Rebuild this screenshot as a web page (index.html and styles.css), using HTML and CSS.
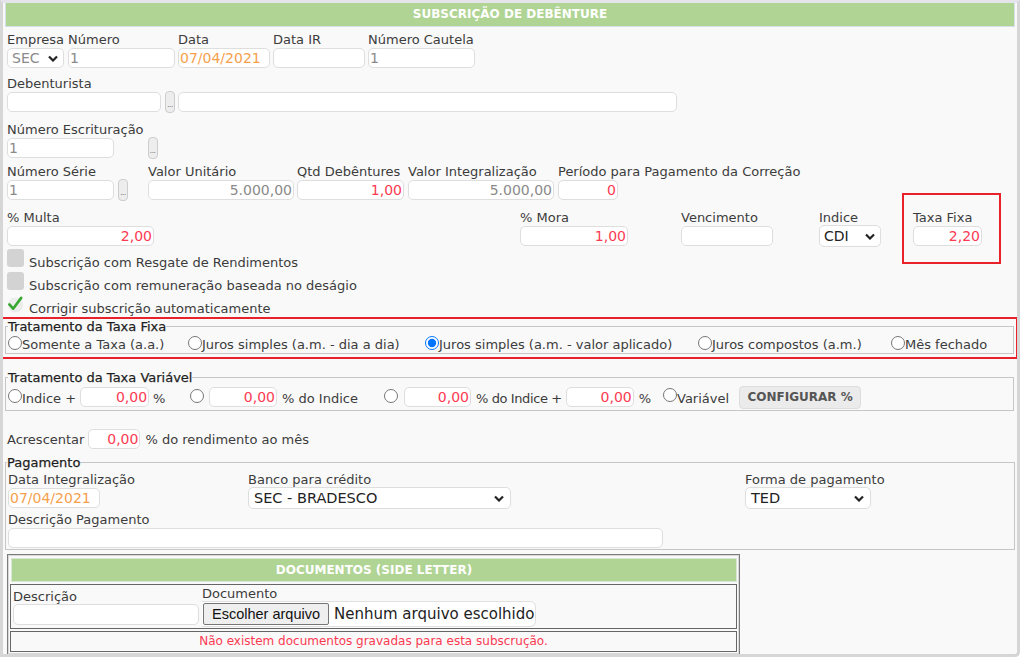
FILE: index.html
```html
<!DOCTYPE html>
<html lang="pt-BR">
<head>
<meta charset="utf-8">
<title>Subscrição de Debênture</title>
<link rel="stylesheet" href="styles.css">
</head>
<body>
<div class="panel">
  <div class="title">SUBSCRIÇÃO DE DEBÊNTURE</div>
  <div class="content">

    <div class="row r1">
      <div class="f"><label>Empresa</label>
        <div class="sel w57"><span class="muted">SEC</span><svg class="chev" width="10" height="7" viewBox="0 0 10 7"><path d="M1 1.5 L5 5.5 L9 1.5" fill="none" stroke="#222" stroke-width="2.2"/></svg></div>
      </div>
      <div class="f ml4"><label>Número</label><input class="inp w107 muted" value="1"></div>
      <div class="f ml3"><label>Data</label><input class="inp w92 orange" value="07/04/2021"></div>
      <div class="f ml3"><label>Data IR</label><input class="inp w92" value=""></div>
      <div class="f ml3"><label>Número Cautela</label><input class="inp w107 muted" value="1"></div>
    </div>

    <div class="row r2">
      <div class="f"><label>Debenturista</label><input class="inp w154" value=""></div>
      <div class="dots ml4">...</div>
      <input class="inp w499 ml3" value="">
    </div>

    <div class="row r3">
      <div class="f"><label>Número Escrituração</label><input class="inp w107 muted" value="1"></div>
      <div class="dots ml4">...</div>
    </div>

    <div class="row r4">
      <div class="f"><label>Número Série</label><input class="inp w107 muted" value="1"></div>
      <div class="dots ml4">...</div>
      <div class="f ml20"><label>Valor Unitário</label><input class="inp w146 num muted" value="5.000,00"></div>
      <div class="f ml3"><label>Qtd Debêntures</label><input class="inp w107 num red" value="1,00"></div>
      <div class="f ml4"><label>Valor Integralização</label><input class="inp w146 num muted" value="5.000,00"></div>
      <div class="f ml4"><label>Período para Pagamento da Correção</label><input class="inp w60 num red" value="0"></div>
    </div>

    <div class="row r5">
      <div class="f c513"><label>% Multa</label><input class="inp w147 num red" value="2,00"></div>
      <div class="f c161"><label>% Mora</label><input class="inp w108 num red" value="1,00"></div>
      <div class="f c138"><label>Vencimento</label><input class="inp w92" value=""></div>
      <div class="f c94"><label>Indice</label>
        <div class="sel sel22 w62"><span class="dark">CDI</span><svg class="chev" width="10" height="7" viewBox="0 0 10 7"><path d="M1 1.5 L5 5.5 L9 1.5" fill="none" stroke="#222" stroke-width="2.2"/></svg></div>
      </div>
      <div class="f taxa"><label>Taxa Fixa</label><input class="inp w69 num red" value="2,20"></div>
    </div>

    <div class="checks">
      <div class="chk"><div class="box"></div><span>Subscrição com Resgate de Rendimentos</span></div>
      <div class="chk"><div class="box"></div><span>Subscrição com remuneração baseada no deságio</span></div>
      <div class="chk"><svg class="tick" width="18" height="18" viewBox="0 0 18 18"><circle cx="9" cy="10" r="8" fill="#ececec"/><path d="M2.5 9.5 L6.5 14 L15 2.5" fill="none" stroke="#36a832" stroke-width="2.8" stroke-linecap="round" stroke-linejoin="round"/></svg><span>Corrigir subscrição automaticamente</span></div>
    </div>

    <div class="hl">
      <fieldset class="fs fs-fixa">
        <legend>Tratamento da Taxa Fixa</legend>
        <div class="radios">
          <label class="ropt o1"><input type="radio" name="fixa"><span>Somente a Taxa (a.a.)</span></label>
          <label class="ropt o2"><input type="radio" name="fixa"><span>Juros simples (a.m. - dia a dia)</span></label>
          <label class="ropt o3"><input type="radio" name="fixa" checked><span>Juros simples (a.m. - valor aplicado)</span></label>
          <label class="ropt o4"><input type="radio" name="fixa"><span>Juros compostos (a.m.)</span></label>
          <label class="ropt"><input type="radio" name="fixa"><span>Mês fechado</span></label>
        </div>
      </fieldset>
    </div>

    <fieldset class="fs fs-var">
      <legend>Tratamento da Taxa Variável</legend>
      <div class="vrow">
        <div class="grp g1"><input type="radio" name="var"><span class="t">Indice +</span><input class="inp w69 num red ml4" value="0,00"><span class="t ml4">%</span></div>
        <div class="grp g2"><input type="radio" name="var"><input class="inp w68 num red ml5" value="0,00"><span class="t ml5">% do Indice</span></div>
        <div class="grp g3"><input type="radio" name="var"><input class="inp w67 num red ml6" value="0,00"><span class="t ml5 tight">% do Indice +</span><input class="inp w68 num red ml4" value="0,00"><span class="t ml5">%</span></div>
        <div class="grp"><input type="radio" name="var"><span class="t">Variável</span><button class="cfg">CONFIGURAR %</button></div>
      </div>
    </fieldset>

    <div class="row acres">
      <span class="t">Acrescentar</span><input class="inp w52 num red ml4" value="0,00"><span class="t ml5">% do rendimento ao mês</span>
    </div>

    <fieldset class="fs fs-pag">
      <legend>Pagamento</legend>
      <div class="row prow1">
        <div class="f c240"><label>Data Integralização</label><input class="inp w92 orange" value="07/04/2021"></div>
        <div class="f c497"><label>Banco para crédito</label>
          <div class="sel sel22 w263 big"><span class="dark">SEC - BRADESCO</span><svg class="chev" width="10" height="7" viewBox="0 0 10 7"><path d="M1 1.5 L5 5.5 L9 1.5" fill="none" stroke="#222" stroke-width="2.2"/></svg></div>
        </div>
        <div class="f"><label>Forma de pagamento</label>
          <div class="sel sel22 w126 big"><span class="dark">TED</span><svg class="chev" width="10" height="7" viewBox="0 0 10 7"><path d="M1 1.5 L5 5.5 L9 1.5" fill="none" stroke="#222" stroke-width="2.2"/></svg></div>
        </div>
      </div>
      <div class="row prow2">
        <div class="f"><label>Descrição Pagamento</label><input class="inp w655" value=""></div>
      </div>
    </fieldset>

    <div class="docs">
      <div class="docs-title">DOCUMENTOS (SIDE LETTER)</div>
      <div class="docs-row">
        <div class="f dfield"><label>Descrição</label><input class="inp w186 h21" value=""></div>
        <div class="f ml3"><label>Documento</label>
          <div class="file"><span class="file-btn">Escolher arquivo</span><span class="file-txt">Nenhum arquivo escolhido</span></div>
        </div>
      </div>
      <div class="docs-empty">Não existem documentos gravadas para esta subscrução.</div>
    </div>

  </div>
</div>
</body>
</html>
```

FILE: styles.css
```css
*, *::before, *::after { box-sizing: border-box; }
html, body { margin: 0; padding: 0; background: #ffffff; }
body {
  font-family: "DejaVu Sans", "Liberation Sans", sans-serif;
  font-size: 13px;
  color: #3c3c3c;
}

.panel {
  width: 1020px;
  height: 657px;
  background: #f9f9f9;
  border: 3px solid #d6d6d6;
  border-top-color: #e4e4ea;
  border-bottom-right-radius: 5px;
  overflow: hidden;
}

.title {
  margin: 0 2px;
  height: 24px;
  background: #b0d494;
  border: 1px solid #d3e0ea;
  border-top: none;
  color: #ffffff;
  font-weight: bold;
  font-size: 12px;
  line-height: 23px;
  text-align: center;
}

.content { padding: 0 2px; }

.row { display: flex; align-items: flex-end; padding-left: 2px; }
.r1 { margin-top: 5px; }
.r2 { margin-top: 8px; }
.r3 { margin-top: 10px; }
.r4 { margin-top: 6px; }
.r5 { margin-top: 10px; }

.f { display: flex; flex-direction: column; flex: none; }
.f label { display: block; height: 15px; line-height: 15px; white-space: nowrap; }

.inp {
  display: block;
  height: 20px;
  margin: 1px 0 0 0;
  padding: 0 1px;
  border: 1px solid #dedede;
  border-radius: 5px;
  background: #ffffff;
  font-family: "DejaVu Sans", sans-serif;
  font-size: 14px;
  color: #333333;
  outline: none;
  flex: none;
}
.num { text-align: right; }
.muted { color: #8a8a8a; }
.orange { color: #f6a04c; }
.red { color: #fb3a52; }
.dark { color: #222222; }
.h21 { height: 21px; }

.w52 { width: 52px; } .w57 { width: 57px; } .w60 { width: 60px; } .w62 { width: 62px; }
.w67 { width: 67px; } .w68 { width: 68px; } .w69 { width: 69px; } .w92 { width: 92px; }
.w107 { width: 107px; } .w108 { width: 108px; } .w126 { width: 126px; } .w146 { width: 146px; }
.w147 { width: 147px; } .w154 { width: 154px; } .w186 { width: 186px; } .w263 { width: 263px; }
.w499 { width: 499px; } .w655 { width: 655px; }
.ml3 { margin-left: 3px; } .ml4 { margin-left: 4px; } .ml5 { margin-left: 5px; }
.ml6 { margin-left: 6px; } .ml20 { margin-left: 20px; }
.c513 { width: 513px; } .c161 { width: 161px; } .c138 { width: 138px; } .c94 { width: 94px; }
.c240 { width: 240px; } .c497 { width: 497px; }

.sel {
  display: flex;
  align-items: center;
  justify-content: space-between;
  height: 20px;
  margin-top: 1px;
  padding: 0 5px 0 4px;
  border: 1px solid #dedede;
  border-radius: 5px;
  background: #ffffff;
  font-size: 14px;
}
.sel22 { height: 22px; margin-top: 0; margin-bottom: -1px; }
.big { font-size: 14.5px; padding: 0 6px 0 5px; }
.chev { flex: none; }

.dots {
  width: 10px;
  height: 22px;
  margin-bottom: -1px;
  border: 1px solid #cdcdcd;
  border-radius: 4px;
  background: #ededed;
  font-size: 7px;
  line-height: 7px;
  letter-spacing: -0.4px;
  color: #555;
  display: flex;
  align-items: flex-end;
  justify-content: center;
  padding-bottom: 3px;
  overflow: hidden;
  flex: none;
}

/* annotation frame around Taxa Fixa */
.taxa { position: relative; }
.taxa::after {
  content: "";
  position: absolute;
  left: -11px;
  top: -17px;
  width: 99px;
  height: 71px;
  border: 2px solid #e8212b;
}

.checks { margin-top: 2px; }
.chk { display: flex; height: 23px; padding-left: 2px; }
.chk .box { width: 17px; height: 18px; margin-top: 1px; background: #d3d3d3; border-radius: 3px; flex: none; }
.chk .tick { margin-top: 1px; flex: none; width: 17px; }
.chk span { margin: 7px 0 0 5px; line-height: 15px; white-space: nowrap; }

.fs {
  margin: 0;
  padding: 0 2px 2px 2px;
  border: 1px solid #c6c6c6;
  min-width: 0;
}
.fs legend {
  padding: 0;
  line-height: 15px;
  font-size: 13px;
  color: #1e1e1e;
  -webkit-text-stroke: 0.25px #1e1e1e;
}

.hl {
  border: 2px solid #e8212b;
  margin: 0 -3px 0 -5px;
}
.fs-fixa { margin: 0 2px 3px 3px; }

.radios { display: flex; height: 17px; }
.ropt { display: flex; align-items: flex-start; flex: none; white-space: nowrap; }
.ropt.o1 { width: 180px; }
.ropt.o2 { width: 237px; }
.ropt.o3 { width: 273px; }
.ropt.o4 { width: 193px; }
.ropt input, .grp input[type="radio"] {
  width: 14px;
  height: 14px;
  margin: 2px 0 0 0;
  flex: none;
}
.ropt span { margin-top: 3px; line-height: 15px; }

.fs-var { margin: 11px 1px 0 0; padding-bottom: 1px; }
.vrow { display: flex; height: 24px; align-items: center; }
.grp { display: flex; align-items: center; flex: none; white-space: nowrap; }
.grp input[type="radio"] { align-self: flex-start; margin-top: 2px; }
.grp .inp { margin-top: 0; }
.g1 { width: 182px; }
.g2 { width: 194px; }
.g3 { width: 279px; }
.t { line-height: 15px; white-space: nowrap; margin-top: 3px; }
.tight { letter-spacing: -0.4px; }
.cfg {
  margin-left: 10px;
  width: 122px;
  height: 23px;
  border: 1px solid #dddddd;
  border-radius: 4px;
  background: #ebebeb;
  font-family: "DejaVu Sans", sans-serif;
  font-weight: bold;
  font-size: 12px;
  color: #555555;
  padding: 0;
}

.acres { margin-top: 18px; align-items: center; height: 20px; }
.acres .inp { margin-top: 0; }
.acres .t { margin-top: 0; }

.fs-pag { margin-top: 6px; padding: 0 2px 1px 2px; }
.fs-pag legend { margin-left: -1px; }
.fs-pag .row { padding-left: 0; }
.prow1 { margin-top: 2px; }
.prow2 { margin-top: 4px; }

.docs {
  margin: 4px 0 0 2px;
  width: 733px;
  border: 1px solid #7c7c7c;
  box-shadow: inset 0 0 0 1px #d8d8d8;
  padding: 3px 2px 2px 3px;
}
.docs-title {
  height: 24px;
  background: #b0d494;
  border: 1px solid #d8e6d4;
  color: #ffffff;
  font-weight: bold;
  font-size: 12px;
  line-height: 22px;
  text-align: center;
}
.docs-row {
  display: flex;
  align-items: flex-end;
  margin: 2px 0 0 -1px;
  height: 45px;
  border: 1px solid #666666;
  padding: 0 0 1px 2px;
}
.dfield { margin-bottom: 2px; }
.dfield .inp { margin-top: 0; }
.file {
  display: flex;
  align-items: center;
  height: 26px;
  background: #ffffff;
  border: 1px solid #e0e0e0;
  border-left: none;
  border-radius: 0 6px 6px 0;
  padding-right: 1px;
  color: #222222;
}
.file-btn {
  display: flex;
  align-items: center;
  height: 22px;
  padding: 0 8px;
  margin-left: 1px;
  background: #efefef;
  border: 1px solid #767676;
  border-radius: 2px;
  color: #111111;
  white-space: nowrap;
  font-family: "Liberation Sans", Arial, sans-serif;
  font-size: 14.5px;
}
.file-txt { margin-left: 5px; white-space: nowrap; font-size: 15px; }
.docs-empty {
  margin: 2px 0 0 -1px;
  height: 21px;
  border: 1px solid #666666;
  color: #fb3a52;
  font-size: 12px;
  line-height: 19px;
  text-align: center;
}
```
